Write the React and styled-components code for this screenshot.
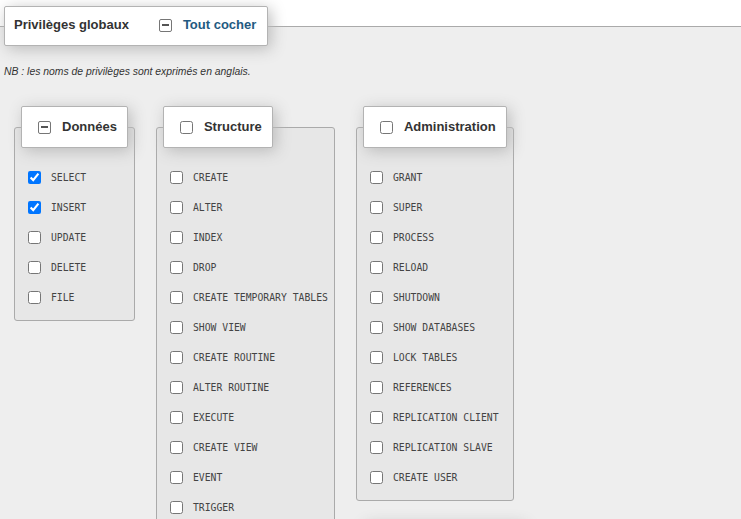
import React from 'react';
import styled, { createGlobalStyle } from 'styled-components';

const GlobalStyle = createGlobalStyle`
  html, body {
    margin: 0;
    padding: 0;
    background: #fff;
    overflow: hidden;
  }
  body {
    font-family: "Liberation Sans", Arial, sans-serif;
    font-size: 13px;
    color: #333;
  }
`;

const Page = styled.fieldset`
  margin: 6px 0 0 0;
  padding: 20px 0 60px 4px;
  border: none;
  border-top: 1px solid #aaa;
  background: #eee;
  min-height: 600px;
`;

const Legend = styled.legend`
  margin: 0;
  padding: ${(p) => (p.$main ? '9px 11px 11px 9px' : '11px 10px')};
  background: #fff;
  border: 1px solid #b3b3b3;
  border-radius: 2px;
  box-shadow: 3px 3px 15px #bbb;
  font-weight: bold;
  font-size: 13px;
  line-height: 18px;
  color: #333;
  white-space: nowrap;
`;

const LegendInner = styled.span`
  display: inline-flex;
  align-items: center;
  vertical-align: top;
`;

const MixedBox = styled.span`
  display: inline-flex;
  align-items: center;
  justify-content: center;
  box-sizing: border-box;
  width: 13px;
  height: 13px;
  flex: none;
  border: 1px solid #767676;
  border-radius: 2px;
  background: #fff;
  margin-left: ${(p) => p.$ml || 0}px;
  margin-right: 11px;

  &::after {
    content: '';
    width: 7px;
    height: 2px;
    background: #555;
  }
`;

const Spacer = styled.span`
  width: 30px;
  flex: none;
`;

const Check = styled.input.attrs({ type: 'checkbox' })`
  margin: 0 ${(p) => p.$mr || 0}px 0 ${(p) => p.$ml || 0}px;
  width: 13px;
  height: 13px;
  flex: none;
`;

const CheckAll = styled.span`
  color: #235a81;
`;

const Note = styled.p`
  margin: 0;
  font-size: 10.4px;
  line-height: 12px;
  font-style: italic;
  color: #333;
`;

const Groups = styled.div`
  display: flex;
  align-items: flex-start;
  gap: 21px;
  margin: 28px 0 0 10px;
`;

const Column = styled.div`
  display: flex;
  flex-direction: column;
  align-items: flex-start;
  gap: 21px;
`;

const Group = styled.fieldset`
  margin: 0;
  padding: 14px 6px 8px;
  border: 1px solid #aaa;
  border-radius: 3px;
  background: #e7e7e7;
`;

const Row = styled.label`
  display: flex;
  align-items: center;
  gap: 10px;
  height: 30px;
  padding-left: 7px;
  font-family: "DejaVu Sans Mono", "Liberation Mono", monospace;
  font-size: 9.75px;
  color: #444;
  white-space: nowrap;
`;

const groups = [
  {
    title: 'Données',
    mixed: true,
    items: [
      ['SELECT', true],
      ['INSERT', true],
      ['UPDATE', false],
      ['DELETE', false],
      ['FILE', false],
    ],
  },
  {
    title: 'Structure',
    items: [
      'CREATE',
      'ALTER',
      'INDEX',
      'DROP',
      'CREATE TEMPORARY TABLES',
      'SHOW VIEW',
      'CREATE ROUTINE',
      'ALTER ROUTINE',
      'EXECUTE',
      'CREATE VIEW',
      'EVENT',
      'TRIGGER',
    ].map((n) => [n, false]),
  },
  {
    title: 'Administration',
    items: [
      'GRANT',
      'SUPER',
      'PROCESS',
      'RELOAD',
      'SHUTDOWN',
      'SHOW DATABASES',
      'LOCK TABLES',
      'REFERENCES',
      'REPLICATION CLIENT',
      'REPLICATION SLAVE',
      'CREATE USER',
    ].map((n) => [n, false]),
  },
];

function PrivGroup({ group }) {
  return (
    <Group>
      <Legend>
        <LegendInner>
          {group.mixed ? <MixedBox $ml={6} /> : <Check $ml={6} $mr={11} />}
          {group.title}
        </LegendInner>
      </Legend>
      {group.items.map(([name, checked]) => (
        <Row key={name}>
          <Check defaultChecked={checked} />
          {name}
        </Row>
      ))}
    </Group>
  );
}

export default function App() {
  return (
    <>
      <GlobalStyle />
      <Page>
        <Legend $main>
          <LegendInner>
            Privilèges globaux
            <Spacer />
            <MixedBox />
            <CheckAll>Tout cocher</CheckAll>
          </LegendInner>
        </Legend>
        <Note>NB : les noms de privilèges sont exprimés en anglais.</Note>
        <Groups>
          <PrivGroup group={groups[0]} />
          <PrivGroup group={groups[1]} />
          <Column>
            <PrivGroup group={groups[2]} />
            <Group>
              <Legend>
                <LegendInner>Limites de ressources</LegendInner>
              </Legend>
            </Group>
          </Column>
        </Groups>
      </Page>
    </>
  );
}
